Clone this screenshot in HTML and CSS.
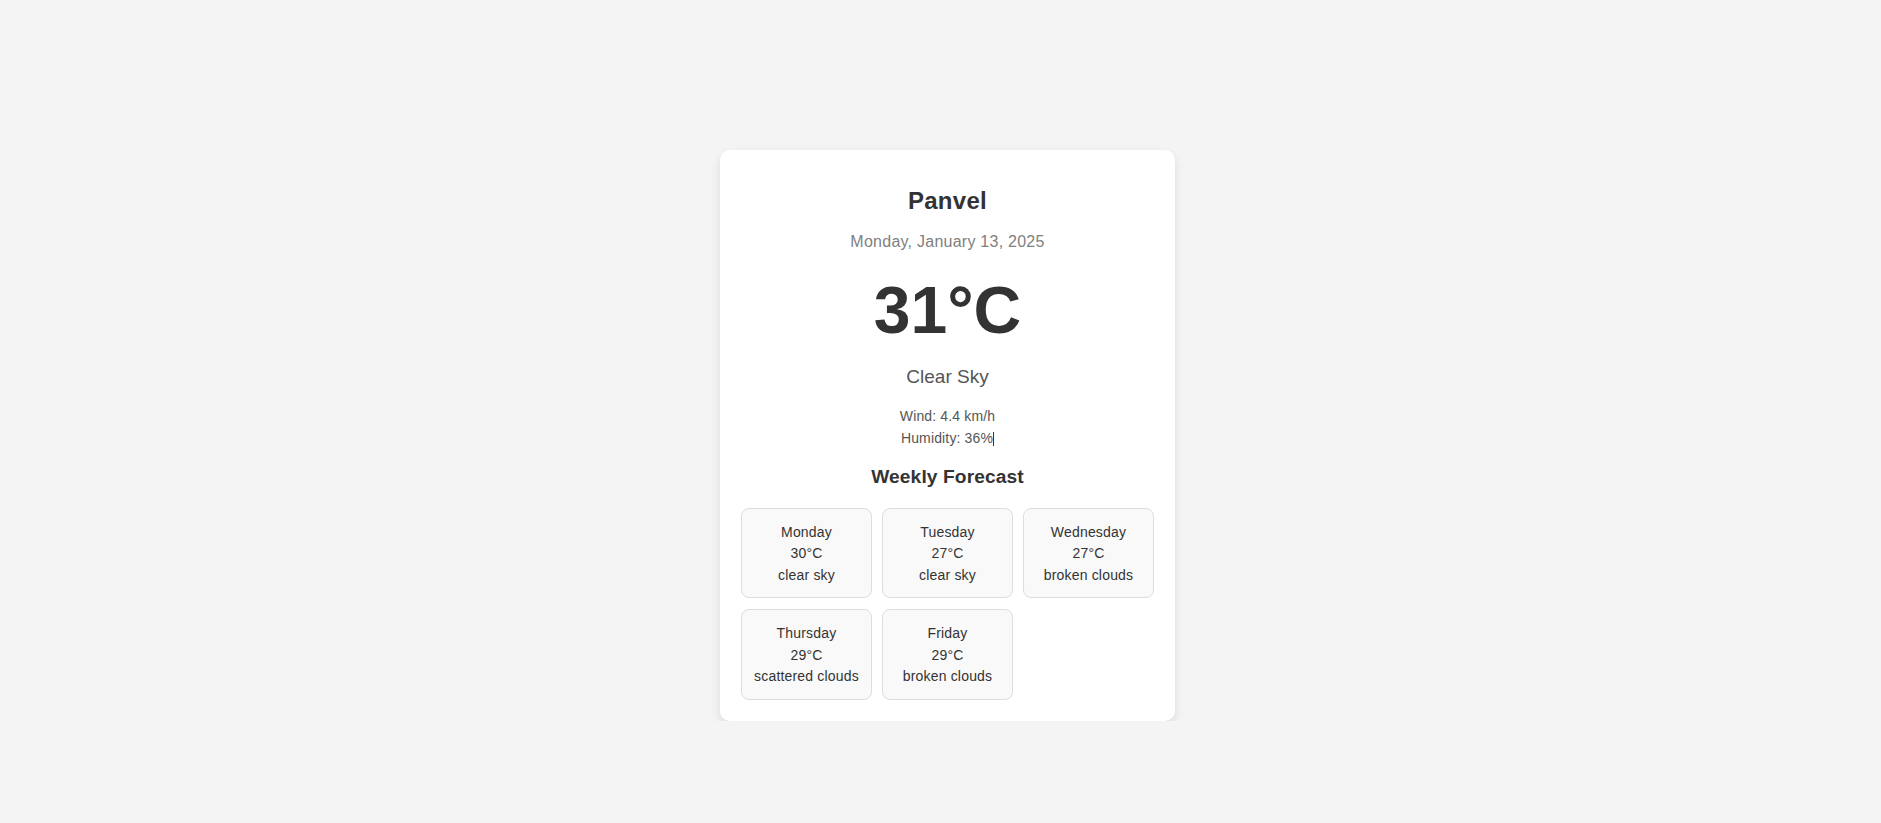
FILE: index.html
```html
<!DOCTYPE html>
<html lang="en">
<head>
<meta charset="utf-8">
<title>Weather</title>
<link rel="stylesheet" href="styles.css">
</head>
<body>
<div class="page">
  <div class="card">
    <h2 class="city">Panvel</h2>
    <p class="date">Monday, January 13, 2025</p>
    <div class="temp">31°C</div>
    <p class="desc">Clear Sky</p>
    <div class="details">
      <p>Wind: 4.4 km/h</p>
      <p>Humidity: 36%<span class="caret"></span></p>
    </div>
    <h3 class="weekly-title">Weekly Forecast</h3>
    <div class="forecast">
      <div class="day"><p>Monday</p><p>30°C</p><p>clear sky</p></div>
      <div class="day"><p>Tuesday</p><p>27°C</p><p>clear sky</p></div>
      <div class="day"><p>Wednesday</p><p>27°C</p><p>broken clouds</p></div>
      <div class="day"><p>Thursday</p><p>29°C</p><p>scattered clouds</p></div>
      <div class="day"><p>Friday</p><p>29°C</p><p>broken clouds</p></div>
    </div>
  </div>
</div>
</body>
</html>
```
FILE: styles.css
```css
html, body {
  margin: 0;
  padding: 0;
  background: #f4f4f4;
  font-family: "Liberation Sans", Arial, sans-serif;
  color: #333;
}

.page {
  display: flex;
  justify-content: center;
  padding-top: 150px;
  padding-left: 14px;
}

.card {
  box-sizing: border-box;
  width: 455px;
  background: #fff;
  border-radius: 10px;
  box-shadow: 0 4px 10px rgba(0, 0, 0, 0.1);
  padding: 20px 21px 21px;
  text-align: center;
}

.card p {
  margin: 0;
}

.city {
  margin: 17px 0 0;
  font-size: 24px;
  line-height: 28px;
  font-weight: bold;
  letter-spacing: 0.3px;
  color: #333;
}

.date {
  margin-top: 17px !important;
  font-size: 16px;
  line-height: 20px;
  letter-spacing: 0.25px;
  color: #808080;
}

.temp {
  margin-top: 20px;
  font-size: 66px;
  line-height: 76px;
  font-weight: bold;
  color: #333;
}

.desc {
  margin-top: 17px !important;
  font-size: 19px;
  line-height: 24px;
  color: #555;
}

.details {
  margin-top: 15.5px;
  font-size: 14px;
  line-height: 22px;
  letter-spacing: 0.15px;
  color: #555;
}

.caret {
  display: inline-block;
  width: 1px;
  height: 14px;
  background: #333;
  vertical-align: -3px;
}

.weekly-title {
  margin: 16.3px 0 0;
  font-size: 19.2px;
  line-height: 23px;
  font-weight: bold;
  letter-spacing: 0.1px;
  color: #333;
}

.forecast {
  margin-top: 20px;
  display: grid;
  grid-template-columns: repeat(3, 1fr);
  gap: 11px 10px;
}

.day {
  background: #f9f9f9;
  border: 1px solid #ddd;
  border-radius: 8px;
  padding: 13px 4px 11px;
  font-size: 14px;
  line-height: 21.5px;
  letter-spacing: 0.18px;
  color: #333;
}
```
